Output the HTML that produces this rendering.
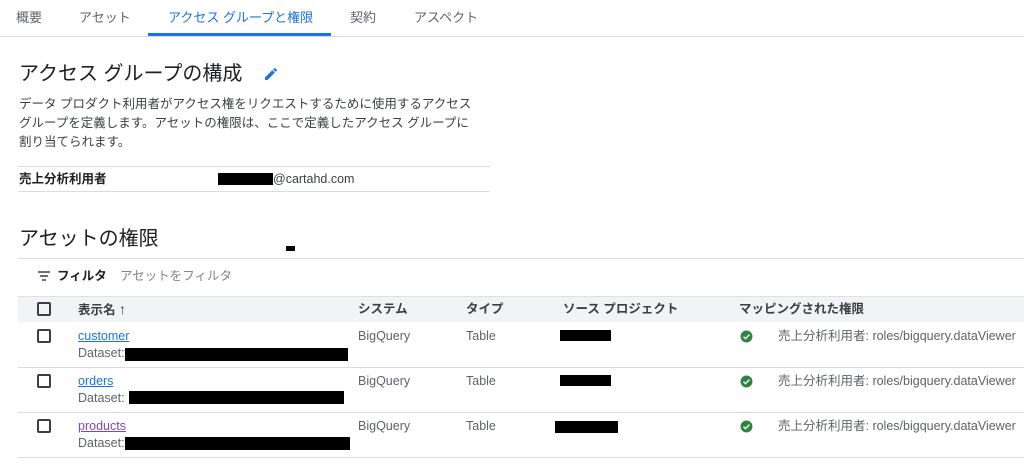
<!DOCTYPE html>
<html><head><meta charset="utf-8"><style>
*{margin:0;padding:0;box-sizing:border-box}
body{width:1024px;height:464px;overflow:hidden;background:#fff;font-family:"Liberation Sans","Noto Sans CJK JP",sans-serif;color:#202124;position:relative}
.a{position:absolute;white-space:nowrap;line-height:16px}
.tab{top:10px;font-size:13px;color:#5f6368}
.bk{position:absolute;background:#000}
.hl{position:absolute;height:1px;background:#dadce0}
.cb{position:absolute;left:37px;width:14px;height:14px;border:2px solid #3c4043;border-radius:2px}
.lnk{color:#1a73e8;text-decoration:underline;font-size:12.5px}
.sub{font-size:12.5px;color:#5f6368}
.cell{font-size:12.5px;color:#5f6368}
.th{font-size:12.5px;font-weight:bold;color:#3c4043}
</style></head><body>
<div class="a tab" style="left:16px">概要</div>
<div class="a tab" style="left:79px">アセット</div>
<div class="a tab" style="left:168px;color:#1a73e8">アクセス グループと権限</div>
<div class="a tab" style="left:350px">契約</div>
<div class="a tab" style="left:414px">アスペクト</div>
<div class="hl" style="left:0;top:36px;width:1024px"></div>
<div style="position:absolute;left:148px;top:33px;width:183px;height:3px;background:#1a73e8"></div>

<div class="a" style="left:19px;top:62px;font-size:20px;line-height:24px">アクセス グループの構成</div>
<svg class="a" style="left:263px;top:66px" width="16" height="16" viewBox="0 0 24 24"><path fill="#1a73e8" d="M3 17.25V21h3.75L17.81 9.94l-3.75-3.75L3 17.25zM20.71 7.04a1 1 0 0 0 0-1.41l-2.34-2.34a1 1 0 0 0-1.41 0l-1.83 1.83 3.75 3.75 1.83-1.83z"/></svg>
<div class="a" style="left:19px;top:95px;font-size:12.5px;line-height:19px;color:#3c4043">データ プロダクト利用者がアクセス権をリクエストするために使用するアクセス<br>グループを定義します。アセットの権限は、ここで定義したアクセス グループに<br>割り当てられます。</div>
<div class="hl" style="left:18px;top:166px;width:472px"></div>
<div class="a" style="left:19px;top:171px;font-size:12.5px;font-weight:bold">売上分析利用者</div>
<div class="bk" style="left:218px;top:173px;width:55px;height:12px"></div>
<div class="a" style="left:273px;top:171px;font-size:12.5px;color:#3c4043">@cartahd.com</div>
<div class="hl" style="left:18px;top:191px;width:472px"></div>

<div class="a" style="left:19px;top:227px;font-size:20px;line-height:24px">アセットの権限</div>
<div class="bk" style="left:286px;top:246px;width:9px;height:5px"></div>
<div class="hl" style="left:18px;top:258px;width:1006px"></div>
<svg class="a" style="left:37px;top:271px" width="14" height="10" viewBox="0 0 14 10"><path d="M1 1h12M3 5h8M5 9h4" stroke="#3c4043" stroke-width="1.6"/></svg>
<div class="a" style="left:57px;top:268px;font-size:12.5px;font-weight:bold">フィルタ</div>
<div class="a" style="left:120px;top:268px;font-size:12.5px;color:#80868b">アセットをフィルタ</div>

<div style="position:absolute;left:18px;top:296px;width:1006px;height:26px;background:#f1f3f4;border-top:1px solid #e0e0e0"></div>
<div class="cb" style="top:302px"></div>
<div class="a th" style="left:78px;top:301px">表示名 <span style="font-size:14px">↑</span></div>
<div class="a th" style="left:358px;top:301px">システム</div>
<div class="a th" style="left:466px;top:301px">タイプ</div>
<div class="a th" style="left:563px;top:301px">ソース プロジェクト</div>
<div class="a th" style="left:739px;top:301px">マッピングされた権限</div>

<div class="cb" style="top:329px"></div>
<div class="a lnk" style="left:78px;top:328px">customer</div>
<div class="a sub" style="left:78px;top:345px">Dataset:</div>
<div class="bk" style="left:125px;top:348px;width:223px;height:13px"></div>
<div class="a cell" style="left:358px;top:328px">BigQuery</div>
<div class="a cell" style="left:466px;top:328px">Table</div>
<div class="bk" style="left:560px;top:330px;width:51px;height:11px"></div>
<div class="hl" style="left:18px;top:367px;width:1006px"></div>

<div class="cb" style="top:374px"></div>
<div class="a lnk" style="left:78px;top:373px">orders</div>
<div class="a sub" style="left:78px;top:390px">Dataset:</div>
<div class="bk" style="left:129px;top:391px;width:215px;height:13px"></div>
<div class="a cell" style="left:358px;top:373px">BigQuery</div>
<div class="a cell" style="left:466px;top:373px">Table</div>
<div class="bk" style="left:560px;top:375px;width:51px;height:11px"></div>
<div class="hl" style="left:18px;top:412px;width:1006px"></div>

<div class="cb" style="top:419px"></div>
<div class="a lnk" style="left:78px;top:418px;color:#7b4ab0">products</div>
<div class="a sub" style="left:78px;top:435px">Dataset:</div>
<div class="bk" style="left:125px;top:437px;width:225px;height:13px"></div>
<div class="a cell" style="left:358px;top:418px">BigQuery</div>
<div class="a cell" style="left:466px;top:418px">Table</div>
<div class="bk" style="left:555px;top:421px;width:63px;height:12px"></div>
<div class="hl" style="left:18px;top:457px;width:1006px"></div>

<svg class="a" style="left:740px;top:330px" width="13" height="13" viewBox="0 0 24 24"><circle cx="12" cy="12" r="11" fill="#2e8540"/><path d="M6.5 12.5l3.5 3.5 7.5-7.5" stroke="#fff" stroke-width="2.6" fill="none"/></svg>
<svg class="a" style="left:740px;top:375px" width="13" height="13" viewBox="0 0 24 24"><circle cx="12" cy="12" r="11" fill="#2e8540"/><path d="M6.5 12.5l3.5 3.5 7.5-7.5" stroke="#fff" stroke-width="2.6" fill="none"/></svg>
<svg class="a" style="left:740px;top:420px" width="13" height="13" viewBox="0 0 24 24"><circle cx="12" cy="12" r="11" fill="#2e8540"/><path d="M6.5 12.5l3.5 3.5 7.5-7.5" stroke="#fff" stroke-width="2.6" fill="none"/></svg>
<div class="a cell" style="left:778px;top:328px">売上分析利用者: roles/bigquery.dataViewer</div>
<div class="a cell" style="left:778px;top:373px">売上分析利用者: roles/bigquery.dataViewer</div>
<div class="a cell" style="left:778px;top:418px">売上分析利用者: roles/bigquery.dataViewer</div>
</body></html>
